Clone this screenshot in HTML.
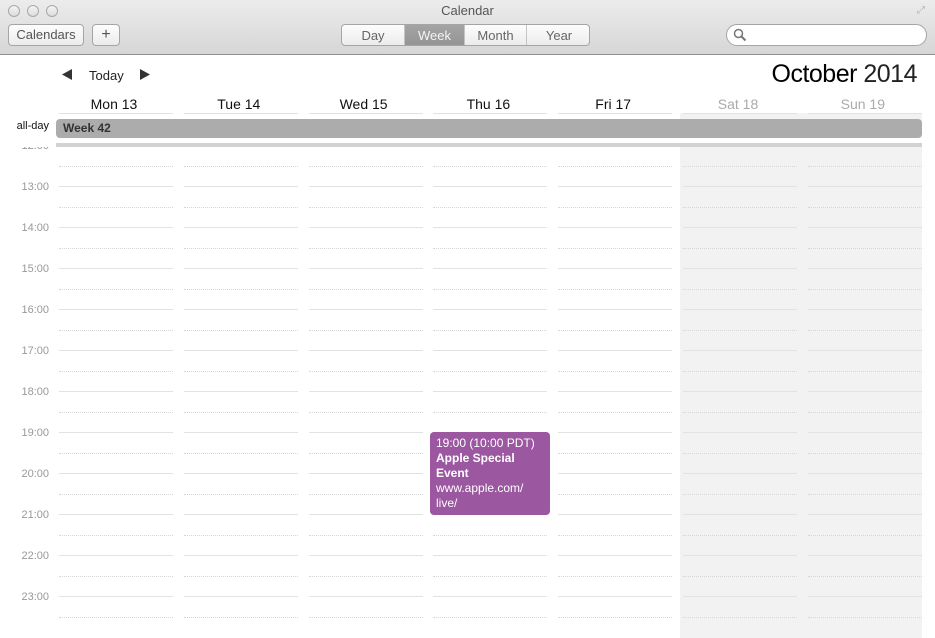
<!DOCTYPE html>
<html><head><meta charset="utf-8"><style>
*{margin:0;padding:0;box-sizing:border-box}
body{width:935px;height:638px;overflow:hidden;background:#fff;font-family:"Liberation Sans",sans-serif;position:relative}
.a{position:absolute}
#tb{left:0;top:0;width:935px;height:55px;background:linear-gradient(#ececec,#d6d6d6);border-bottom:1px solid #8e8e8e}
.dot{width:12px;height:12px;border-radius:50%;border:1px solid #a8a8a8;background:linear-gradient(#f4f4f4,#dcdcdc);top:5px}
.btn{border:1px solid #a5a5a5;border-radius:4px;background:linear-gradient(#fdfdfd,#ececec);font-size:13px;color:#555;text-align:center;line-height:20px;height:22px}
.seg{top:24px;height:22px;font-size:13px;color:#666;text-align:center;line-height:21px;border-right:1px solid #c4c4c4}
.hd{font-size:14px;color:#111;text-align:center;top:96px;width:110px}
.hl{height:1px;background:#e2e2e2}
.hh{height:0;border-top:1px dotted #d6d6d6}
.tm{font-size:11px;color:#999;width:49px;text-align:right;left:0}
</style></head><body>
<div id="tb" class="a"></div>
<div class="a dot" style="left:8px"></div><div class="a dot" style="left:27px"></div><div class="a dot" style="left:46px"></div>
<div class="a" style="left:0;width:935px;top:3px;text-align:center;font-size:13px;color:#555">Calendar</div>
<div class="a" style="left:917px;top:5px;font-size:10px;color:#aaa">⤢</div>
<div class="a btn" style="left:8px;top:24px;width:76px">Calendars</div>
<div class="a btn" style="left:92px;top:24px;width:28px;font-size:16px">+</div>
<div class="a" style="left:341px;top:24px;width:249px;height:22px;border:1px solid #a5a5a5;border-radius:4px;background:linear-gradient(#fdfdfd,#ececec);overflow:hidden">
<div class="a seg" style="left:0;top:0;width:63px">Day</div>
<div class="a seg" style="left:63px;top:0;width:60px;background:linear-gradient(#a4a4a4,#939393);color:#f4f4f4">Week</div>
<div class="a seg" style="left:123px;top:0;width:62px">Month</div>
<div class="a seg" style="left:185px;top:0;width:64px;border:0">Year</div>
</div>
<div class="a" style="left:726px;top:24px;width:201px;height:22px;border:1px solid #a5a5a5;border-radius:11px;background:#fff"></div>
<svg class="a" style="left:733px;top:28px" width="14" height="14"><circle cx="5.5" cy="5.5" r="4" stroke="#777" stroke-width="1.5" fill="none"/><line x1="8.5" y1="8.5" x2="12.5" y2="12.5" stroke="#777" stroke-width="2"/></svg>

<svg class="a" style="left:62px;top:69px" width="10" height="11"><polygon points="10,0 10,11 0,5.5" fill="#333"/></svg>
<div class="a" style="left:89px;top:68px;font-size:13px;color:#222">Today</div>
<svg class="a" style="left:140px;top:69px" width="10" height="11"><polygon points="0,0 0,11 10,5.5" fill="#333"/></svg>
<div class="a" style="right:18px;top:60px;font-size:25px;color:#000;letter-spacing:-0.5px">October <span style="font-weight:300;color:#222">2014</span></div>

<div class="a" style="left:680px;top:113px;width:242px;height:525px;background:#f2f2f2"></div>
<div id="g"></div>
<div class="a" style="left:0;top:138px;width:935px;height:9px;background:#fff"></div>
<div class="a" style="left:0;width:49px;text-align:right;top:120px;font-size:11px;color:#111">all-day</div>
<div class="a" style="left:56px;top:119px;width:866px;height:19px;background:#acacac;border-radius:4px;font-size:12px;font-weight:bold;color:#333;line-height:19px;padding-left:7px">Week 42</div>
<div class="a" style="left:56px;top:143px;width:866px;height:4px;background:#d2d2d2"></div>
<div class="a" style="left:430px;top:432px;width:120px;height:83px;background:#9b57a0;border-radius:4px;color:#fff;font-size:12px;line-height:15px;padding:4px 6px">19:00 (10:00 PDT)<br><b>Apple Special Event</b><br>www.apple.com/ live/</div>
<script>
var g=document.getElementById('g'),h='';
var days=['Mon 13','Tue 14','Wed 15','Thu 16','Fri 17','Sat 18','Sun 19'];
for(var i=0;i<7;i++){var x=59+i*124.8;
h+='<div class="a hd" style="left:'+x+'px;color:'+(i>4?'#aaa':'#111')+'">'+days[i]+'</div>';
h+='<div class="a hl" style="left:'+x+'px;top:113px;width:114px"></div>';
for(var k=0;k<12;k++){var y=145+k*41;
if(k>0)h+='<div class="a hl" style="left:'+x+'px;top:'+y+'px;width:114px"></div>';
h+='<div class="a hh" style="left:'+x+'px;top:'+(y+21)+'px;width:114px"></div>';}}
for(var k=1;k<12;k++){var y=145+k*41;h+='<div class="a tm" style="top:'+(y-5)+'px">'+(12+k)+':00</div>';}
h+='<div class="a tm" style="top:140px">12:00</div>';
g.innerHTML=h;
</script>
</body></html>
